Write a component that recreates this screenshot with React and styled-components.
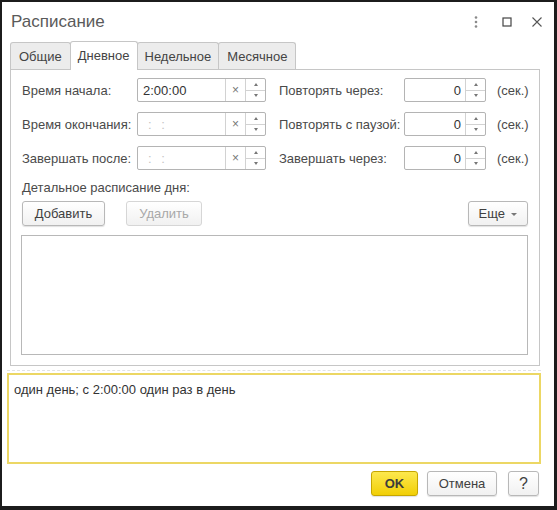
import React from "react";
import styled, { createGlobalStyle, css } from "styled-components";

const Global = createGlobalStyle`
  html, body { margin: 0; padding: 0; background: #fff; }
  body { font-family: "Liberation Sans", Arial, sans-serif; }
  * { box-sizing: border-box; }
`;

const Window = styled.div`
  width: 557px;
  height: 510px;
  border-style: solid;
  border-color: #1c1c1c;
  border-width: 2px 3px 4px 2px;
  background: #fff;
  display: flex;
  flex-direction: column;
`;

const Header = styled.div`
  height: 39px;
  display: flex;
  align-items: center;
  padding: 0 11px 2px 9px;
`;

const Title = styled.div`
  flex: 1;
  font-size: 17px;
  color: #5a5a5a;
  padding-top: 3px;
`;

const HeaderIcons = styled.div`
  display: flex;
  align-items: center;
  gap: 20px;
  padding-top: 2px;
  & > svg:last-child {
    margin-left: -2px;
  }
`;

const TabStrip = styled.div`
  height: 28px;
  display: flex;
  align-items: flex-end;
  padding-left: 8px;
`;

const Tab = styled.div`
  height: 27px;
  padding: 0 ${(p) => p.$px || 8}px;
  display: flex;
  align-items: center;
  font-size: 13px;
  color: #444;
  background: #ececec;
  border: 1px solid #c6c6c6;
  border-bottom: none;
  border-radius: 3px 3px 0 0;
  margin-right: -1px;
  ${(p) =>
    p.$active &&
    css`
      background: #fff;
      position: relative;
      z-index: 1;
      margin-bottom: -1px;
      height: 29px;
      padding-bottom: 1px;
    `}
`;

const Panel = styled.div`
  margin: 0 14px 0 8px;
  height: 297px;
  border: 1px solid #c6c6c6;
  padding: 8px 11px 10px 11px;
  display: flex;
  flex-direction: column;
`;

const FormGrid = styled.div`
  display: grid;
  grid-template-columns: 115px 129px 13px 125px 82px 11px auto;
  grid-auto-rows: 24px;
  row-gap: 10px;
  align-items: center;
`;

const Label = styled.div`
  font-size: 13px;
  color: #4a4a4a;
  white-space: nowrap;
  grid-column: ${(p) => p.$col};
`;

const Field = styled.div`
  grid-column: ${(p) => p.$col};
  height: 24px;
  border: 1px solid #b4b4b4;
  border-radius: 2px;
  display: flex;
  background: #fff;
`;

const Value = styled.div`
  flex: 1;
  padding: 0 4px 0 5px;
  display: flex;
  align-items: center;
  justify-content: ${(p) => (p.$right ? "flex-end" : "flex-start")};
  font-size: 13px;
  color: ${(p) => (p.$placeholder ? "#c4c4c4" : "#333")};
  letter-spacing: ${(p) => (p.$placeholder ? "3px" : "0")};
  padding-left: ${(p) => (p.$placeholder ? "10px" : "5px")};
`;

const Clear = styled.div`
  width: 20px;
  border-left: 1px solid #d2d2d2;
  display: flex;
  align-items: center;
  justify-content: center;
  font-size: 12px;
  color: #777;
`;

const Spin = styled.div`
  width: 20px;
  border-left: 1px solid #d2d2d2;
  display: flex;
  flex-direction: column;
`;

const SpinHalf = styled.div`
  flex: 1;
  display: flex;
  align-items: center;
  justify-content: center;
  & + & {
    border-top: 1px solid #d2d2d2;
  }
`;

const Tri = styled.span`
  width: 0;
  height: 0;
  border-left: 2px solid transparent;
  border-right: 2px solid transparent;
  ${(p) =>
    p.$up
      ? css`border-bottom: 3px solid #777;`
      : css`border-top: 3px solid #777;`}
`;

const Suffix = styled.div`
  grid-column: 7;
  font-size: 13px;
  color: #4a4a4a;
`;

const SectionLabel = styled.div`
  margin-top: 10px;
  height: 16px;
  font-size: 13px;
  color: #4a4a4a;
  line-height: 16px;
`;

const ButtonRow = styled.div`
  margin-top: 5px;
  display: flex;
  align-items: center;
  gap: 21px;
`;

const Button = styled.div`
  height: 25px;
  padding: 0 ${(p) => p.$px || 12}px;
  display: flex;
  align-items: center;
  gap: 6px;
  font-size: 13px;
  color: ${(p) => (p.$disabled ? "#a8a8a8" : "#404040")};
  background: linear-gradient(#ffffff, #f1f1f1);
  border: 1px solid ${(p) => (p.$disabled ? "#d6d6d6" : "#b8b8b8")};
  border-radius: 3px;
  box-shadow: ${(p) => (p.$disabled ? "none" : "0 1px 1px rgba(0,0,0,0.12)")};
  ${(p) => p.$push && css`margin-left: auto;`}
  ${(p) =>
    p.$primary &&
    css`
      background: linear-gradient(#fde84e, #f1cf06);
      border-color: #c6a600;
      font-weight: bold;
      color: #3c3c3c;
      justify-content: center;
    `}
  ${(p) => p.$w && css`width: ${p.$w}px; justify-content: center; padding: 0;`}
`;

const SmallArrow = styled.span`
  width: 0;
  height: 0;
  border-left: 3px solid transparent;
  border-right: 3px solid transparent;
  border-top: 3px solid #777;
  margin-top: 1px;
`;

const TableBox = styled.div`
  margin-top: 9px;
  height: 120px;
  margin-left: -1px;
  width: 507px;
  border: 1px solid #b8b8b8;
`;

const Summary = styled.div`
  margin: 4px 13px 0 5px;
  padding-top: 2px;
  border-top: 1px dashed #e2e2e2;
`;

const SummaryBox = styled.div`
  height: 91px;
  border: 2px solid #ecd764;
  padding: 7px 5px;
  font-size: 13px;
  color: #333;
`;

const Footer = styled.div`
  margin-top: 7px;
  display: flex;
  justify-content: flex-end;
  gap: 9px;
  padding-right: 15px;
`;

const Help = styled(Button)`
  margin-left: 2px;
  font-size: 16px;
`;

function TimeField({ col, value }) {
  return (
    <Field $col={col}>
      <Value $placeholder={!value}>{value || ": :"}</Value>
      <Clear>×</Clear>
      <Spin>
        <SpinHalf><Tri $up /></SpinHalf>
        <SpinHalf><Tri /></SpinHalf>
      </Spin>
    </Field>
  );
}

function NumField({ col, value }) {
  return (
    <Field $col={col}>
      <Value $right>{value}</Value>
      <Spin>
        <SpinHalf><Tri $up /></SpinHalf>
        <SpinHalf><Tri /></SpinHalf>
      </Spin>
    </Field>
  );
}

const rows = [
  ["Время начала:", "2:00:00", "Повторять через:"],
  ["Время окончания:", "", "Повторять с паузой:"],
  ["Завершать после:", "", "Завершать через:"],
];

export default function App() {
  return (
    <>
      <Global />
      <Window>
        <Header>
          <Title>Расписание</Title>
          <HeaderIcons>
            <svg width="10" height="14" viewBox="0 0 10 14">
              <circle cx="5" cy="2.5" r="1.3" fill="#8a8a8a" />
              <circle cx="5" cy="7" r="1.3" fill="#8a8a8a" />
              <circle cx="5" cy="11.5" r="1.3" fill="#8a8a8a" />
            </svg>
            <svg width="12" height="12" viewBox="0 0 12 12">
              <rect x="2" y="2" width="8" height="8" fill="none" stroke="#444" strokeWidth="1.2" />
            </svg>
            <svg width="12" height="12" viewBox="0 0 12 12">
              <path d="M1.5 1.5 L10.5 10.5 M10.5 1.5 L1.5 10.5" stroke="#555" strokeWidth="1.1" />
            </svg>
          </HeaderIcons>
        </Header>
        <TabStrip>
          <Tab>Общие</Tab>
          <Tab $active $px={7}>Дневное</Tab>
          <Tab $px={7}>Недельное</Tab>
          <Tab $px={8}>Месячное</Tab>
        </TabStrip>
        <Panel>
          <FormGrid>
            {rows.map(([l1, v, l2]) => (
              <React.Fragment key={l1}>
                <Label $col={1}>{l1}</Label>
                <TimeField col={2} value={v} />
                <Label $col={4}>{l2}</Label>
                <NumField col={5} value="0" />
                <Suffix>(сек.)</Suffix>
              </React.Fragment>
            ))}
          </FormGrid>
          <SectionLabel>Детальное расписание дня:</SectionLabel>
          <ButtonRow>
            <Button $w={83}>Добавить</Button>
            <Button $w={76} $disabled>Удалить</Button>
            <Button $push $px={10}>Еще <SmallArrow /></Button>
          </ButtonRow>
          <TableBox />
        </Panel>
        <Summary>
          <SummaryBox>один день; с 2:00:00 один раз в день</SummaryBox>
        </Summary>
        <Footer>
          <Button $primary $w={47}>OK</Button>
          <Button $w={70}>Отмена</Button>
          <Help $w={31}>?</Help>
        </Footer>
      </Window>
    </>
  );
}
